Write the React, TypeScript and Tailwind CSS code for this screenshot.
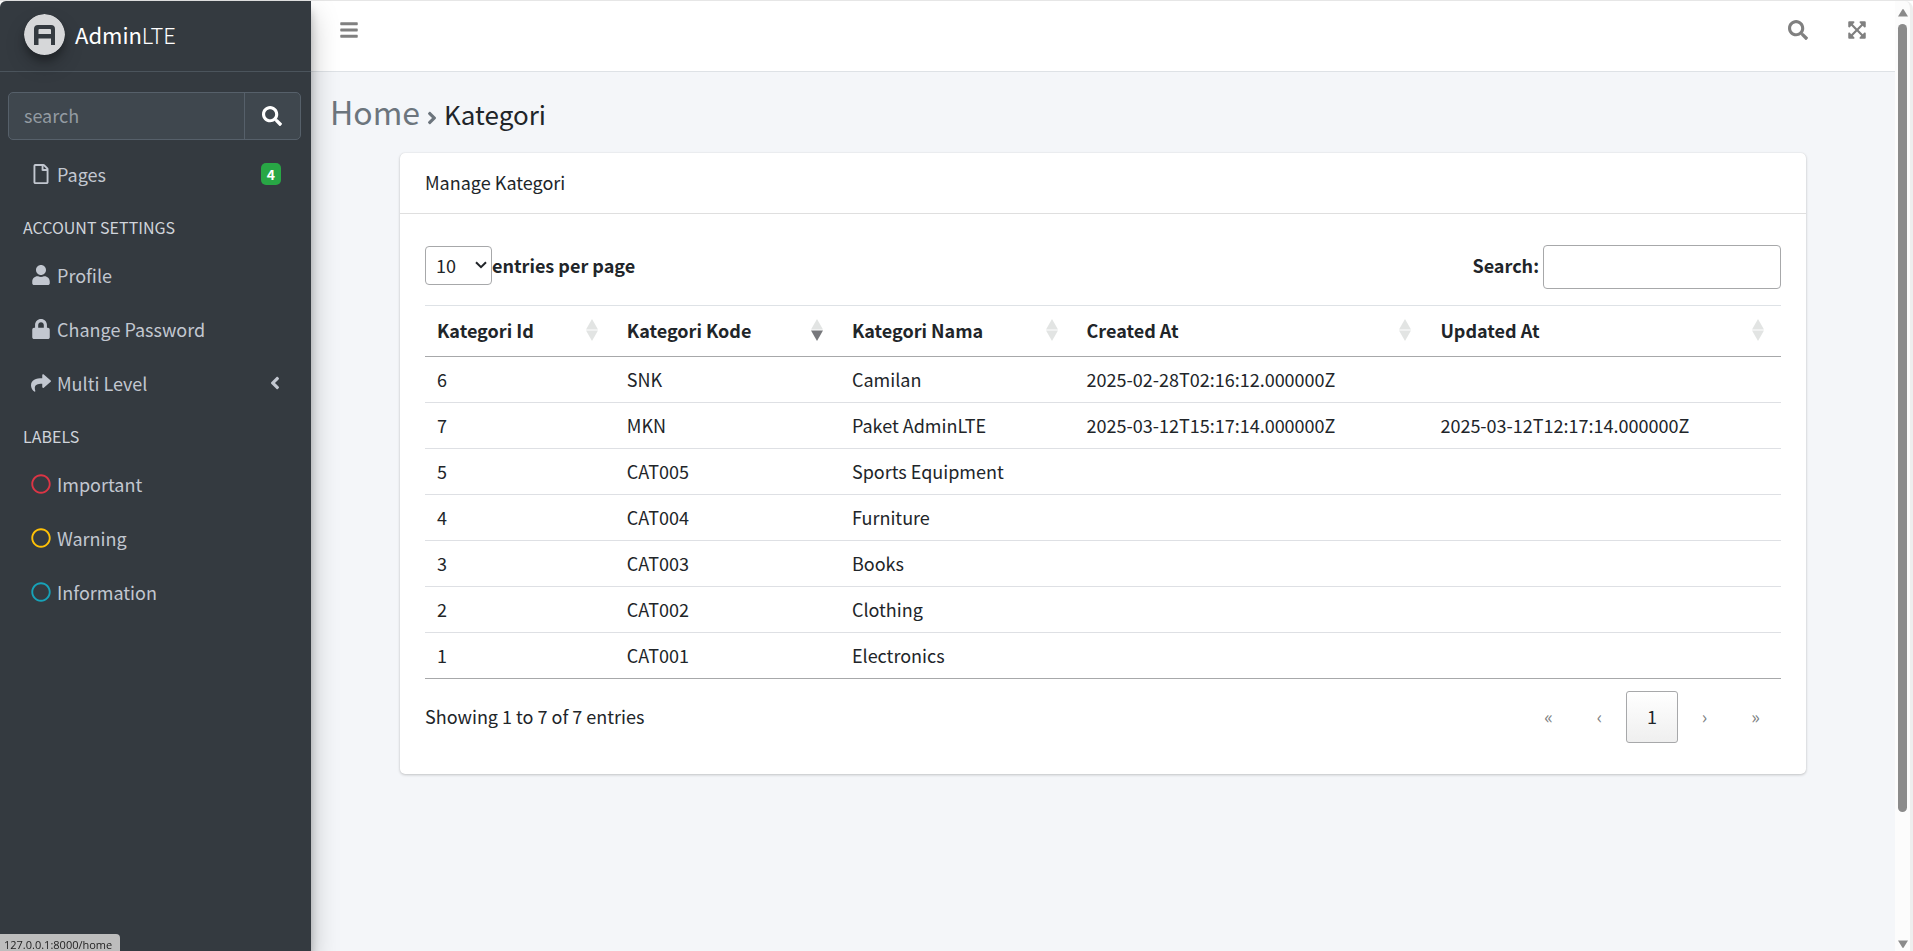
import type { ReactNode } from "react";
import {
  FaSearch,
  FaBars,
  FaRegFile,
  FaUser,
  FaLock,
  FaShare,
  FaRegCircle,
  FaAngleLeft,
  FaAngleRight,
  FaExpandArrowsAlt,
} from "react-icons/fa";

const columns = [
  { label: "Kategori Id", width: "w-[14%]", sorted: false },
  { label: "Kategori Kode", width: "w-[16.6%]", sorted: true },
  { label: "Kategori Nama", width: "w-[17.3%]", sorted: false },
  { label: "Created At", width: "w-[26.1%]", sorted: false },
  { label: "Updated At", width: "w-[26%]", sorted: false },
];

const rows = [
  ["6", "SNK", "Camilan", "2025-02-28T02:16:12.000000Z", ""],
  ["7", "MKN", "Paket AdminLTE", "2025-03-12T15:17:14.000000Z", "2025-03-12T12:17:14.000000Z"],
  ["5", "CAT005", "Sports Equipment", "", ""],
  ["4", "CAT004", "Furniture", "", ""],
  ["3", "CAT003", "Books", "", ""],
  ["2", "CAT002", "Clothing", "", ""],
  ["1", "CAT001", "Electronics", "", ""],
];

function Logo() {
  return (
    <svg viewBox="0 0 41 41" className="size-[41px] rounded-full shadow-[0_10px_20px_rgba(0,0,0,0.19),0_6px_6px_rgba(0,0,0,0.23)]" aria-hidden="true">
      <circle cx="20.5" cy="20.5" r="20.5" fill="#d6d7d9" />
      <path
        fillRule="evenodd"
        fill="#343a40"
        d="M10 31V15Q10 11 14 11H27Q31 11 31 15V31H27V24.500H14.500V31ZM15.500 15Q14.500 15 14.500 16V20H27V16Q27 15 26 15Z"
      />
    </svg>
  );
}

function NavItem({ icon, label, children }: { icon: ReactNode; label: string; children?: ReactNode }) {
  return (
    <li>
      <a href="#" className="flex h-[54px] items-center px-[20px] pb-[2px] text-[#c2c7d0]">
        <span className="mr-[6px] flex w-[21px] justify-center text-[20px]">{icon}</span>
        <span className="flex-1">{label}</span>
        {children}
      </a>
    </li>
  );
}

function NavHeader({ children }: { children: ReactNode }) {
  return <li className="flex h-[47px] items-center px-[23px] pt-[3px] text-[16px] text-[#d0d4db]">{children}</li>;
}

function Sidebar() {
  return (
    <aside className="relative z-10 w-[311px] shrink-0 rounded-tl-md bg-[#343a40] shadow-[0_14px_28px_rgba(0,0,0,0.25),0_10px_10px_rgba(0,0,0,0.22)]">
      <a href="#" className="flex h-[71px] items-center gap-[10px] border-b border-[#4b545c] px-6 pb-[4px] text-[22px] text-white">
        <Logo />
        <span>
          Admin<span className="font-light">LTE</span>
        </span>
      </a>
      <div className="mx-2 mt-5 mr-[10px] flex h-[48px] overflow-hidden rounded-[5px] border border-[#56606a] bg-[#3f474e]">
        <input type="search" aria-label="search" placeholder="search" className="min-w-0 flex-1 px-[15px] pb-[2px] outline-none placeholder:text-[#939ba2]" />
        <button type="button" aria-label="Submit search" className="flex w-[56px] items-center justify-center border-l border-[#56606a] pr-[2px] text-[20px] text-white">
          <FaSearch />
        </button>
      </div>
      <nav className="mt-[8px] px-[10px]">
        <ul>
          <NavItem icon={<FaRegFile />} label="Pages">
            <span className="flex h-[22px] w-[20px] items-center justify-center rounded-[5px] bg-[#28a745] text-[14px] font-bold text-white">4</span>
          </NavItem>
        </ul>
        <ul className="-mx-[10px]">
          <NavHeader>ACCOUNT SETTINGS</NavHeader>
        </ul>
        <ul>
          <NavItem icon={<FaUser />} label="Profile" />
          <NavItem icon={<FaLock />} label="Change Password" />
          <NavItem icon={<FaShare />} label="Multi Level">
            <FaAngleLeft className="w-[12px] text-[20px]" />
          </NavItem>
        </ul>
        <ul className="-mx-[10px]">
          <NavHeader>LABELS</NavHeader>
        </ul>
        <ul>
          <NavItem icon={<FaRegCircle className="text-[#dc3545]" />} label="Important" />
          <NavItem icon={<FaRegCircle className="text-[#ffc107]" />} label="Warning" />
          <NavItem icon={<FaRegCircle className="text-[#17a2b8]" />} label="Information" />
        </ul>
      </nav>
    </aside>
  );
}

function SortIcon({ sorted }: { sorted: boolean }) {
  return (
    <svg viewBox="0 0 12 22" className="h-[22px] w-[12px]" aria-hidden="true">
      <path d="M0 10.500L6 0L12 10.500Z" fill="#e2e4e3" />
      <path d="M0 11.500L6 22L12 11.500Z" fill={sorted ? "#77787c" : "#e2e4e3"} />
    </svg>
  );
}

function CategoryTable() {
  return (
    <table className="w-full table-fixed border-collapse border-y border-t-[#dee2e6] border-b-[#a7a8aa] text-left">
      <thead>
        <tr className="border-b border-[#a7a8aa]">
          {columns.map((c) => (
            <th key={c.label} className={`${c.width} h-[51px] pr-[17px] pb-[2px] pl-[12px] font-bold`}>
              <div className="flex items-center justify-between">
                {c.label}
                <SortIcon sorted={c.sorted} />
              </div>
            </th>
          ))}
        </tr>
      </thead>
      <tbody>
        {rows.map((row) => (
          <tr key={row[0]} className="border-b border-[#dee0e4] last:border-[#a7a8aa]">
            {row.map((cell, i) => (
              <td key={i} className="h-[46px] px-[12px] pb-[2px]">
                {cell}
              </td>
            ))}
          </tr>
        ))}
      </tbody>
    </table>
  );
}

function PageButton({ label, name }: { label: string; name: string }) {
  return (
    <button type="button" aria-label={name} disabled className="h-[52px] w-[49px] pb-[2px] text-[18px] text-[#7d7f82]">
      {label}
    </button>
  );
}

function Scrollbar() {
  return (
    <div className="flex w-[18px] shrink-0 flex-col items-center rounded-tr-lg border-r-[3px] border-[#eeeeee] bg-[#fcfcfc] pt-[8px] pb-[3px]" aria-hidden="true">
      <svg viewBox="0 0 10 8" className="h-[8px] w-[10px]">
        <path d="M5 0Q5.500 0 6 1L10 7.500H0L4 1Q4.500 0 5 0Z" fill="#8b8b8b" />
      </svg>
      <div className="mt-[7px] flex w-full flex-1 flex-col items-center">
        <div className="h-[86%] w-[9px] rounded-full bg-[#8b8b8b]" />
      </div>
      <svg viewBox="0 0 10 8" className="h-[8px] w-[10px]">
        <path d="M5 8Q5.500 8 6 7L10 .5H0L4 7Q4.500 8 5 8Z" fill="#8b8b8b" />
      </svg>
    </div>
  );
}

export default function App() {
  return (
    <div className="flex min-h-screen border-t border-[#e6e6e6] bg-white font-['Noto_Sans_CJK_SC','Noto_Sans_CJK_JP',sans-serif] text-[18px] leading-[30px] text-[#212529]">
      <Sidebar />
      <div className="flex min-w-0 flex-1 flex-col bg-[#f4f6f9]">
        <header className="flex h-[71px] items-start justify-between border-b border-[#dee2e6] bg-white px-[28px] pt-[19px] text-[20px] text-[#808080]">
          <button type="button" aria-label="Toggle sidebar">
            <FaBars />
          </button>
          <div className="flex gap-[39px]">
            <button type="button" aria-label="Search">
              <FaSearch />
            </button>
            <button type="button" aria-label="Fullscreen">
              <FaExpandArrowsAlt />
            </button>
          </div>
        </header>
        <main className="px-[19px] pt-[17px]">
          <h1 className="h-[45px] text-[26px] leading-[44px]">
            <a href="#" className="text-[32px] text-[#6c757d]">Home</a>
            <FaAngleRight className="mx-[6px] inline-block w-[12px] align-[-0.125em] text-[20px] text-[#6c757d]" />
            <span>Kategori</span>
          </h1>
          <section className="mx-auto mt-[19px] max-w-[1406px] rounded-[5px] bg-white shadow-[0_0_1px_rgba(0,0,0,0.125),0_1px_3px_rgba(0,0,0,0.2)]">
            <h2 className="h-[61px] border-b border-[#dfdfdf] px-[25px] pt-[14px]">Manage Kategori</h2>
            <div className="px-[25px] pt-[31px] pb-[31px]">
              <div className="mb-[16px] flex items-start justify-between font-bold">
                <label className="flex items-center pt-px">
                  <span className="relative">
                    <select className="block h-[39px] w-[67px] appearance-none rounded-[4px] border border-[#a7a8aa] bg-white px-[10px] pb-[2px] font-normal" defaultValue="10">
                      <option>10</option>
                      <option>25</option>
                      <option>50</option>
                      <option>100</option>
                    </select>
                    <svg viewBox="0 0 12 8" className="pointer-events-none absolute top-[15px] right-[5px] h-[8px] w-[12px]" aria-hidden="true">
                      <path d="M1 1.200L6 6.200L11 1.200" fill="none" stroke="#212529" strokeWidth="2" />
                    </svg>
                  </span>
                  <span className="pb-[2px]">entries per page</span>
                </label>
                <label className="flex items-center gap-1">
                  <span className="pb-[4px]">Search:</span>
                  <input type="search" className="h-[44px] w-[238px] rounded-[4px] border border-[#a7a8aa] bg-white px-[6px] font-normal" />
                </label>
              </div>
              <CategoryTable />
              <div className="mt-[12px] flex items-center justify-between">
                <p className="pb-[2px]">Showing 1 to 7 of 7 entries</p>
                <nav className="flex gap-[2px] pr-px" aria-label="Pagination">
                  <PageButton label="«" name="First" />
                  <PageButton label="‹" name="Previous" />
                  <button type="button" className="h-[52px] w-[52px] rounded-[3px] border border-[#a7a8aa] bg-linear-to-b from-white to-[#efefef] pb-[2px]">
                    1
                  </button>
                  <PageButton label="›" name="Next" />
                  <PageButton label="»" name="Last" />
                </nav>
              </div>
            </div>
          </section>
        </main>
      </div>
      <Scrollbar />
      <div className="fixed bottom-0 left-0 z-20 h-[17px] w-[120px] rounded-tr-[4px] bg-[#bdbdbd] pl-1 font-['Open_Sans',sans-serif] text-[11px] leading-[22px] text-[#222222]">
        127.0.0.1:8000/home
      </div>
    </div>
  );
}
